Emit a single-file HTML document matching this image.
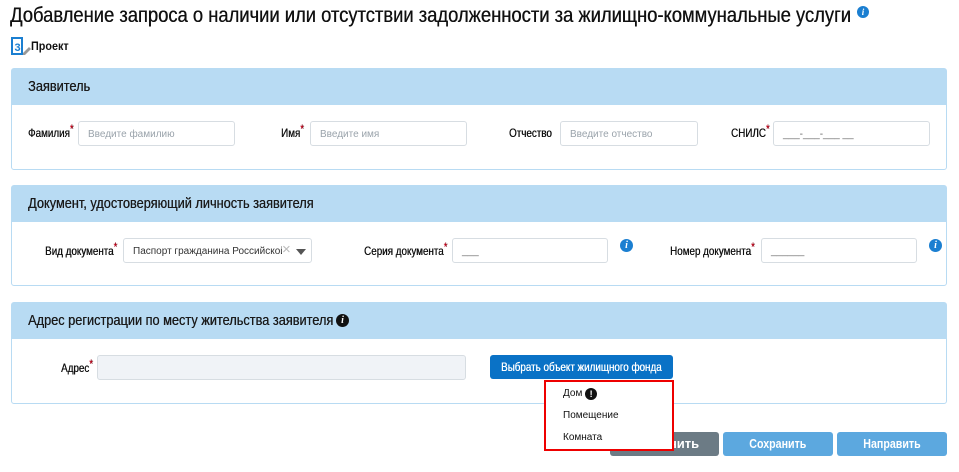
<!DOCTYPE html>
<html><head><meta charset="utf-8"><style>
*{box-sizing:border-box;margin:0;padding:0}
body{width:959px;height:472px;background:#fff;font-family:"Liberation Sans",sans-serif;color:#111;position:relative;overflow:hidden}
.a{position:absolute;white-space:nowrap}
.c{display:inline-block;transform-origin:0 50%;transform:scaleX(.82);white-space:nowrap}
.m{text-shadow:0.35px 0 0 currentColor}
.panel{position:absolute;left:11px;width:936px;border:1px solid #b8dbf3;border-radius:3px;background:#fff}
.hd{height:36px;background:#b8dbf3;font-size:15px;padding:9px 0 0 16px;color:#1a1a1a}
.hd .c{transform:scaleX(.85)}
.lab{font-size:12px;line-height:14px;text-shadow:0.35px 0 0 #111}
.st{color:#d0021b;font-size:12px;position:relative;top:-4px}
.in{position:absolute;height:25px;border:1px solid #d7dde2;border-radius:3px;background:#fff;font-size:10px;color:#9aa3ab;padding:7px 9px;white-space:nowrap;overflow:hidden}
.info{position:absolute;width:13px;height:13px;border-radius:50%;background:#1b7fd1;color:#fff;font:italic bold 10px "Liberation Serif",serif;text-align:center;line-height:13px}
.btn{position:absolute;height:24px;border-radius:3px;color:#fff;font-size:13px;font-weight:bold;text-align:center;line-height:24px;white-space:nowrap}
</style></head><body>
<div class="a m" style="left:10px;top:4px;font-size:21px"><span class="c" style="transform:scaleX(.875)">Добавление запроса о наличии или отсутствии задолженности за жилищно-коммунальные услуги</span></div>
<div class="info" style="left:857px;top:6px;width:12px;height:12px;line-height:12px;font-size:9px">i</div>
<svg class="a" style="left:10px;top:37px" width="22" height="19" viewBox="0 0 22 19"><path d="M2 1h10v16H2z" fill="#fff" stroke="#1b7fd1" stroke-width="2"/><text x="4.5" y="14" font-size="11" font-weight="bold" fill="#1b7fd1" font-family="Liberation Sans">3</text><path d="M13 16l6-6 2 2-6 6h-2z" fill="#999"/></svg>
<div class="a" style="left:31px;top:39px;font-size:12px;font-weight:bold"><span class="c" style="transform:scaleX(.9)">Проект</span></div>

<div class="panel" style="top:68px;height:102px"><div class="hd m"><span class="c">Заявитель</span></div></div>
<div class="a lab" style="left:28px;top:126px"><span class="c">Фамилия<span class="st">*</span></span></div>
<div class="in" style="left:78px;top:121px;width:157px">Введите фамилию</div>
<div class="a lab" style="left:281px;top:126px"><span class="c">Имя<span class="st">*</span></span></div>
<div class="in" style="left:310px;top:121px;width:157px">Введите имя</div>
<div class="a lab" style="left:509px;top:126px"><span class="c">Отчество</span></div>
<div class="in" style="left:560px;top:121px;width:138px">Введите отчество</div>
<div class="a lab" style="left:731px;top:126px"><span class="c">СНИЛС<span class="st">*</span></span></div>
<div class="in" style="left:773px;top:121px;width:157px;color:#666">___-___-___ __</div>

<div class="panel" style="top:185px;height:101px"><div class="hd m"><span class="c">Документ, удостоверяющий личность заявителя</span></div></div>
<div class="a lab" style="left:45px;top:244px"><span class="c">Вид документа<span class="st">*</span></span></div>
<div class="in" style="left:123px;top:238px;width:189px;color:#333"><span style="display:inline-block;width:152px;overflow:hidden">Паспорт гражданина Российской</span></div>
<div class="a" style="left:282px;top:241px;font-size:15px;color:#bbb;background:#fff;line-height:17px">×</div>
<div class="a" style="left:296px;top:249px;width:0;height:0;border-left:5px solid transparent;border-right:5px solid transparent;border-top:6px solid #555"></div>
<div class="a lab" style="left:364px;top:244px"><span class="c">Серия документа<span class="st">*</span></span></div>
<div class="in" style="left:452px;top:238px;width:156px;color:#666">___</div>
<div class="info" style="left:620px;top:239px">i</div>
<div class="a lab" style="left:670px;top:244px"><span class="c">Номер документа<span class="st">*</span></span></div>
<div class="in" style="left:761px;top:238px;width:156px;color:#666">______</div>
<div class="info" style="left:929px;top:239px">i</div>

<div class="panel" style="top:302px;height:102px"><div class="hd m"><span class="c">Адрес регистрации по месту жительства заявителя</span></div></div>
<div class="info" style="left:336px;top:314px;background:#111">i</div>
<div class="a lab" style="left:61px;top:361px"><span class="c">Адрес<span class="st">*</span></span></div>
<div class="in" style="left:97px;top:355px;width:369px;background:#f0f3f7"></div>
<div class="btn" style="left:490px;top:355px;width:183px;background:#0a72c6;font-size:12px;font-weight:normal;text-shadow:0.35px 0 0 #fff;text-align:left;padding-left:11px"><span class="c">Выбрать объект жилищного фонда</span></div>

<div class="btn" style="left:610px;top:432px;width:109px;background:#6c7b85">Заполнить</div>
<div class="btn" style="left:723px;top:432px;width:110px;background:#5ca8df"><span class="c" style="transform-origin:50% 50%">Сохранить</span></div>
<div class="btn" style="left:837px;top:432px;width:110px;background:#5ca8df"><span class="c" style="transform-origin:50% 50%">Направить</span></div>

<div class="a" style="left:544px;top:380px;width:130px;height:71px;border:2px solid #e00;background:#fff;font-size:10px">
<div style="position:absolute;left:17px;top:6px">Дом <span style="display:inline-block;width:12px;height:12px;border-radius:50%;background:#111;color:#fff;font-weight:bold;font-size:9px;text-align:center;line-height:12px;vertical-align:-1px">!</span></div>
<div style="position:absolute;left:17px;top:28px">Помещение</div>
<div style="position:absolute;left:17px;top:50px">Комната</div>
</div>
</body></html>
